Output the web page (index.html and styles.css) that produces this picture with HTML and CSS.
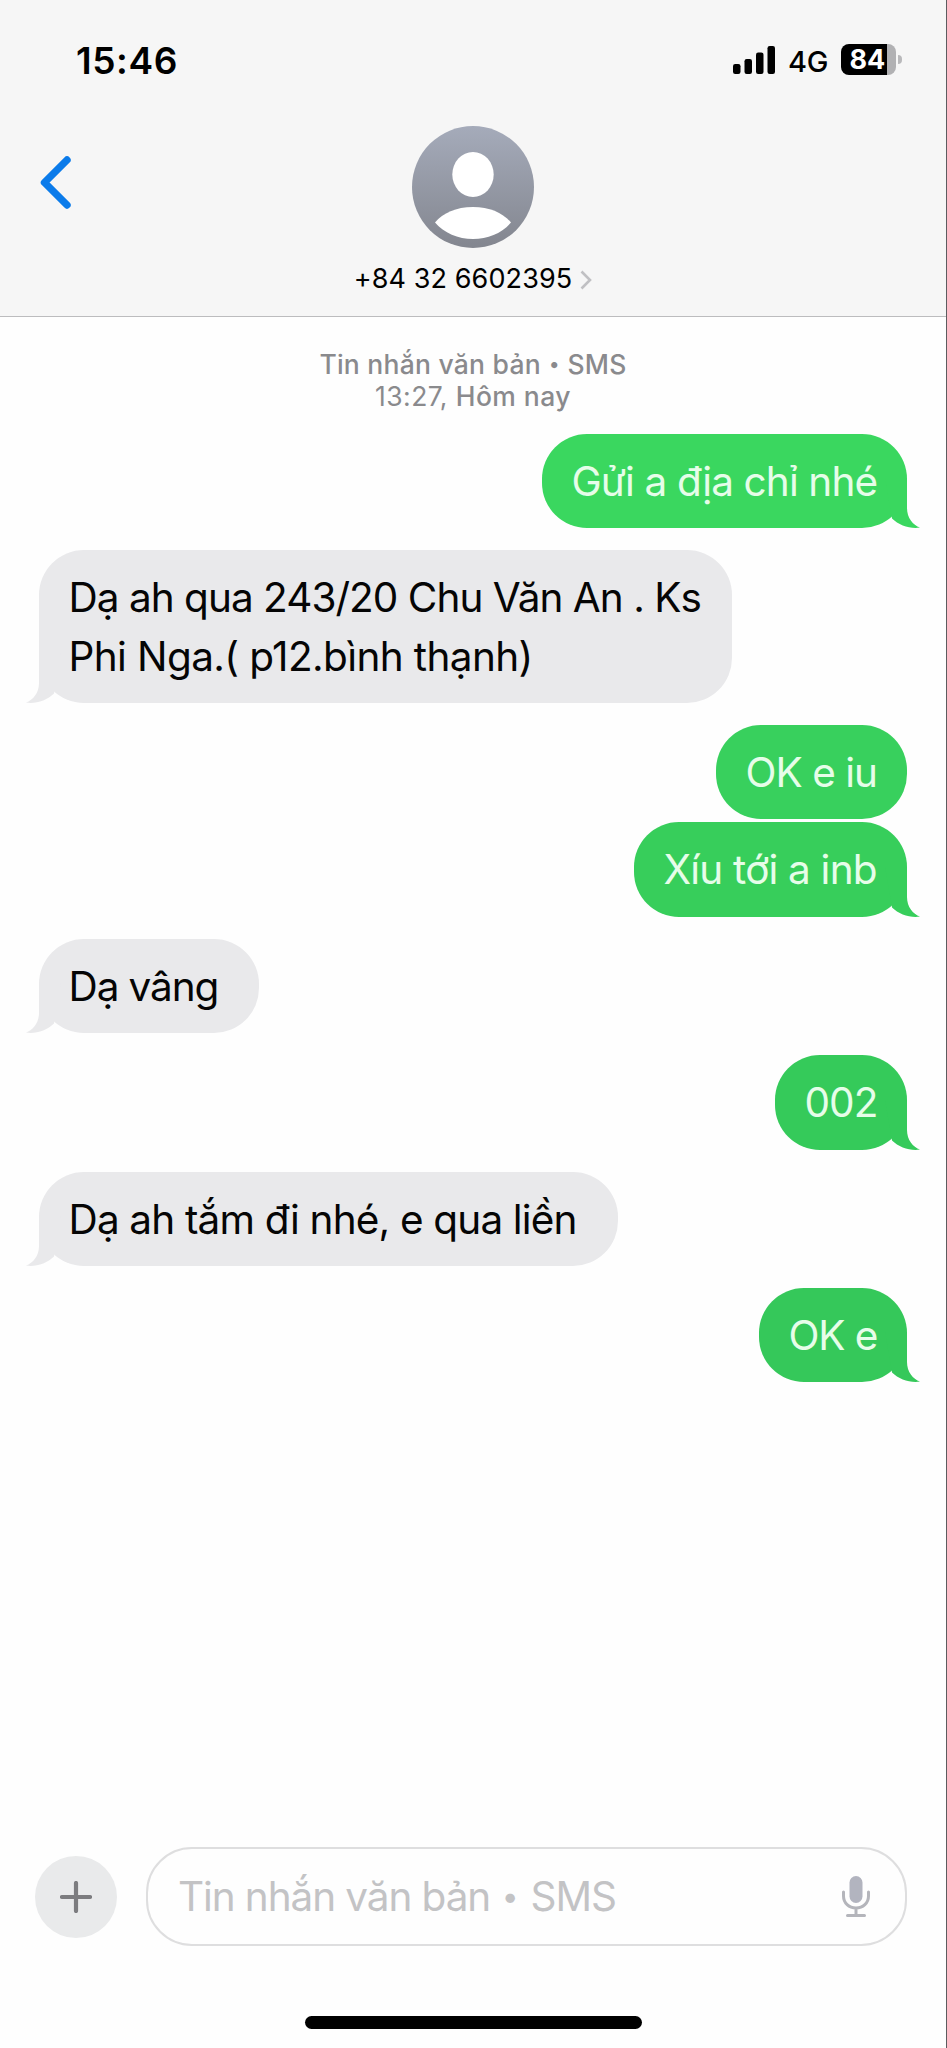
FILE: index.html
```html
<!DOCTYPE html>
<html lang="vi">
<head>
<meta charset="utf-8">
<title>+84 32 6602395</title>
<link rel="stylesheet" href="styles.css">
</head>
<body>
<svg class="defs" width="0" height="0">
  <symbol id="tail" viewBox="0 0 44 50"><path d="M8 0H30V30C30 40 36 47 43 49.6C33 51 22 47.500 15 40.500Z"/></symbol>
</svg>
<div class="phone">
  <header class="header">
    <div class="status">
      <span class="clock">15:46</span>
      <div class="indicators">
        <svg class="signal" viewBox="0 0 42 28"><rect x="0" y="18" width="7.500" height="10" rx="2.200"/><rect x="11.500" y="13" width="7.500" height="15" rx="2.200"/><rect x="23" y="6.500" width="7.500" height="21.500" rx="2.200"/><rect x="34.500" y="0" width="7.500" height="28" rx="2.200"/></svg>
        <span class="network">4G</span>
        <div class="battery"><span class="level">84</span></div>
        <span class="nub"></span>
      </div>
    </div>
    <div class="nav">
      <svg class="back" viewBox="0 0 31 53"><path d="M27 4L4.500 26.500L27 49"/></svg>
      <div class="contact">
        <svg class="avatar" viewBox="0 0 122 122">
          <defs><linearGradient id="av" x1="0" y1="0" x2="0" y2="1"><stop offset="0" stop-color="#a5abba"/><stop offset="1" stop-color="#83868f"/></linearGradient></defs>
          <circle cx="61" cy="61" r="61" fill="url(#av)"/>
          <ellipse cx="61" cy="48.500" rx="20.700" ry="22.500" fill="#fff"/>
          <path d="M23 96.500C31 87 44 81 61 81S91 87 99 96.500C90 107 76 113 61 113S32 107 23 96.500Z" fill="#fff"/>
        </svg>
        <div class="number"><span>+84 32 6602395</span><svg class="more" viewBox="0 0 12 20"><path d="M1.500 1.500L10 10L1.500 18.500"/></svg></div>
      </div>
    </div>
  </header>
  <main class="thread">
    <div class="stamp"><div class="kind">Tin nhắn văn bản<span class="dot"> • </span>SMS</div><div class="when">13:27, <b>Hôm nay</b></div></div>
    <div class="bubble sent g1 m1"><span>Gửi a địa chỉ nhé</span><svg class="tail"><use href="#tail"/></svg></div>
    <div class="bubble received m2"><span>Dạ ah qua 243/20 Chu Văn An . Ks</span><br><span class="l2">Phi Nga.( p12.bình thạnh)</span><svg class="tail"><use href="#tail"/></svg></div>
    <div class="bubble sent g2 m3 joined"><span>OK e iu</span></div>
    <div class="bubble sent g3 m4"><span>Xíu tới a inb</span><svg class="tail"><use href="#tail"/></svg></div>
    <div class="bubble received m5"><span>Dạ vâng</span><svg class="tail"><use href="#tail"/></svg></div>
    <div class="bubble sent g4 m6"><span>002</span><svg class="tail"><use href="#tail"/></svg></div>
    <div class="bubble received m7"><span>Dạ ah tắm đi nhé, e qua liền</span><svg class="tail"><use href="#tail"/></svg></div>
    <div class="bubble sent g5 m8"><span>OK e</span><svg class="tail"><use href="#tail"/></svg></div>
  </main>
  <footer class="footer">
    <div class="composer">
      <div class="plus"><svg viewBox="0 0 32 32"><path d="M16 2V30M2 16H30"/></svg></div>
      <div class="field">
        <span class="placeholder">Tin nhắn văn bản<span class="dot"> • </span>SMS</span>
        <svg class="mic" viewBox="0 0 28 42"><rect x="7.500" y="0" width="13" height="27" rx="6.500"/><path d="M1.500 16V20C1.500 27 7 32 14 32S26.500 27 26.500 20V16M14 32V39M5.500 39.500H22.500"/></svg>
      </div>
    </div>
    <div class="home"></div>
  </footer>
</div>
</body>
</html>
```
FILE: styles.css
```css
* { box-sizing: border-box; }
body { margin: 0; background: #fff; font-family: Inter, "Liberation Sans", sans-serif; color: #000; }
.defs { display: block; }
.phone { width: 947px; height: 2048px; display: flex; flex-direction: column; border-right: 1px solid #5c5c5f; background: #fefefe; overflow: hidden; }

.header { height: 317px; flex: none; background: #f6f6f6; border-bottom: 1px solid #bcbcbe; }
.status { height: 120px; padding: 38px 44px 0 76px; display: flex; justify-content: space-between; align-items: flex-start; }
.clock { font-size: 37px; line-height: 46px; font-weight: 600; letter-spacing: 0.6px; white-space: nowrap; }
.indicators { display: flex; align-items: flex-start; padding-top: 6px; }
.signal { width: 42px; height: 28px; margin-top: 2px; }
.network { width: 66px; padding-left: 13px; font-size: 29px; line-height: 36px; font-weight: 500; letter-spacing: -0.3px; }
.battery { width: 55px; height: 31px; border-radius: 8px; background: linear-gradient(90deg, #000 46px, #b1b1b3 46px); }
.level { display: block; padding-left: 8.5px; font-size: 27px; line-height: 32px; font-weight: 700; color: #fff; }
.nub { width: 4px; height: 9px; margin: 11px 0 0 2px; border-radius: 0 4px 4px 0; background: #b9b9bb; }
.nav { display: grid; grid-template-columns: 40px 1fr 40px; padding: 6px 0 0; }
.back { width: 31px; height: 53px; margin: 30px 0 0 40px; fill: none; stroke: #0b7bea; stroke-width: 7.4; stroke-linecap: round; stroke-linejoin: round; overflow: visible; }
.contact { display: flex; flex-direction: column; align-items: center; }
.avatar { width: 122px; height: 122px; }
.number { display: flex; align-items: center; gap: 8px; margin-top: 15px; font-size: 27px; line-height: 32px; white-space: nowrap; letter-spacing: 0.1px; }
.more { width: 12px; height: 20px; margin-top: 1px; fill: none; stroke: #c0c0c3; stroke-width: 2.6; }

.thread { flex: 1; display: flex; flex-direction: column; padding: 31px 39px 0; }
.stamp { text-align: center; font-size: 26.5px; line-height: 32px; color: #8a8a8d; margin-bottom: 22px; white-space: nowrap; font-weight: 500; letter-spacing: 0.24px; }
.when { font-weight: 400; letter-spacing: 0.42px; }
.when b { font-weight: 500; }
.dot { display: inline-block; width: 1em; text-align: center; letter-spacing: 0; line-height: 1; transform: scale(0.74); }
.bubble { position: relative; height: 94.4px; flex: none; margin-bottom: 22px; padding: 19px 0 0 29.5px; border-radius: 45px; font-size: 40.5px; line-height: 58.3px; letter-spacing: -0.97px; white-space: nowrap; }
.bubble span { position: relative; z-index: 1; }
.sent { align-self: flex-end; color: #e6fde9; }
.received { align-self: flex-start; color: #050505; background: #e9e9eb; fill: #e9e9eb; }
.tail { position: absolute; right: -14px; bottom: 0; width: 44px; height: 50px; }
.received .tail { right: auto; left: -14px; transform: scaleX(-1); }
.joined { margin-bottom: 3px; }
.g1 { background: #3ad75f; fill: #3ad75f; }
.g2 { background: #38d05d; fill: #38d05d; }
.g3 { background: #37ce5b; fill: #37ce5b; }
.g4 { background: #35ca5a; fill: #35ca5a; }
.g5 { background: #35c85a; fill: #35c85a; }
.m1 { width: 365px; letter-spacing: -0.87px; }
.m2 { width: 693px; height: 152.6px; }
.m2 .l2 { letter-spacing: -0.62px; }
.m3 { width: 191px; }
.m4 { width: 273px; letter-spacing: -0.8px; }
.m5 { width: 220px; letter-spacing: -1.1px; }
.m6 { width: 132px; }
.m7 { width: 579px; letter-spacing: -0.83px; }
.m8 { width: 148px; letter-spacing: -1.1px; }

.footer { flex: none; height: 201px; padding-left: 34.5px; }
.composer { display: flex; align-items: center; gap: 29.5px; }
.plus { width: 82px; height: 82px; border-radius: 50%; background: #e9eaeb; display: grid; place-items: center; }
.plus svg { width: 32px; height: 32px; fill: none; stroke: #7c7c7f; stroke-width: 4.2; stroke-linecap: round; }
.field { width: 761px; height: 99px; padding: 0 35px 0 30px; border: 2px solid #dededf; border-radius: 46px; display: flex; align-items: center; justify-content: space-between; }
.placeholder { font-size: 40.5px; line-height: 56px; color: #c3c3c5; white-space: nowrap; letter-spacing: -1.1px; }
.mic { width: 28px; height: 42px; fill: #b2b4bf; }
.mic path { fill: none; stroke: #b4b5bb; stroke-width: 3; stroke-linecap: round; }
.home { width: 337px; height: 12.5px; margin: 70px 0 0 270.5px; border-radius: 7px; background: #000; }
```
